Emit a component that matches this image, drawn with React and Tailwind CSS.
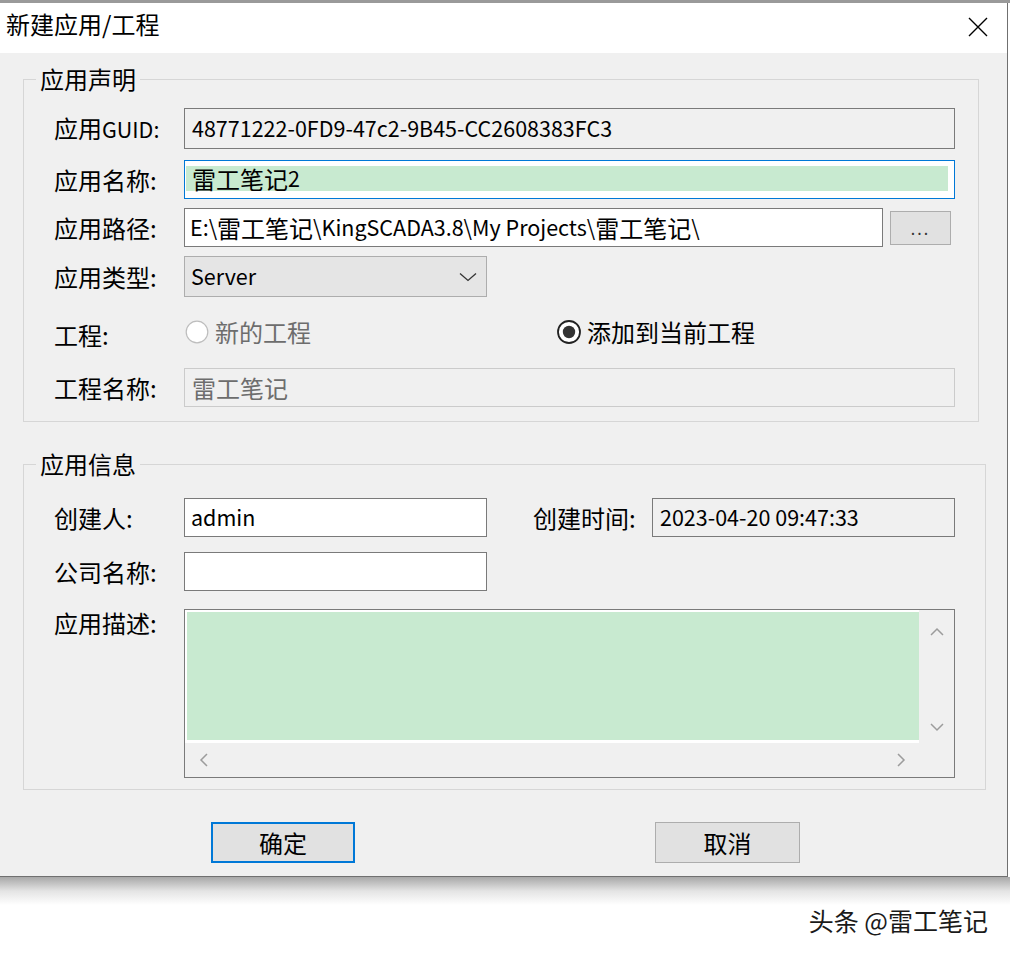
import React from "react";

const Label = ({ children, className = "" }) => (
  <div className={"w-[130px] shrink-0 text-[24px] leading-[28px] text-black " + className}>{children}</div>
);

const L = ({ children }) => <span className="text-[21.5px]">{children}</span>;

const Chevron = ({ dir, className = "" }) => {
  const d = {
    up: "M1 8 L7 2 L13 8",
    down: "M1 2 L7 8 L13 2",
    left: "M8 1 L2 7 L8 13",
    right: "M2 1 L8 7 L2 13",
  }[dir];
  const isV = dir === "up" || dir === "down";
  return (
    <svg width={isV ? 14 : 10} height={isV ? 10 : 14} viewBox={isV ? "0 0 14 10" : "0 0 10 14"} className={className}>
      <path d={d} fill="none" stroke="#9c9c9c" strokeWidth="1.5" />
    </svg>
  );
};

export default function App() {
  return (
    <div className="w-[1010px] h-[958px] bg-white overflow-hidden flex flex-col font-['Noto_Sans_CJK_SC','Noto_Sans',sans-serif] text-black">
      <div className="h-[3px] shrink-0 bg-[#9a9a9a]" />
      <div className="w-[1008px] shrink-0 border-r border-b border-[#707070] bg-[#f0f0f0] flex flex-col">
        {/* Title bar */}
        <div className="h-[50px] bg-white flex items-start justify-between pl-[6px] pr-[19px]">
          <div className="mt-[7px] text-[24px] leading-[28px]">新建应用/工程</div>
          <svg width="20" height="20" viewBox="0 0 20 20" className="mt-[14px]">
            <path d="M1 1 L19 19 M19 1 L1 19" stroke="#000" strokeWidth="1.4" />
          </svg>
        </div>

        {/* Body */}
        <div className="h-[823px] pt-[12px] flex flex-col">
          {/* Group 1 */}
          <fieldset className="ml-[23px] w-[956px] border border-[#d6d6d6] pb-[14px] pl-[30px]">
            <legend className="ml-[-18px] px-[4px] text-[24px] leading-[28px]">应用声明</legend>
            <div className="mt-[15px] flex items-center h-[41px]">
              <Label>应用<L>GUID:</L></Label>
              <div className="w-[771px] h-[41px] border border-[#7a7a7a] bg-[#f0f0f0] flex items-center pl-[7px] text-[21.5px]">
                48771222-0FD9-47c2-9B45-CC2608383FC3
              </div>
            </div>
            <div className="mt-[11px] flex items-center h-[39px]">
              <Label>应用名称:</Label>
              <div className="w-[771px] h-[39px] border border-[#0078d7] bg-white pt-[5px] pb-[7px] pr-[6px] pl-[1px] flex">
                <div className="flex-1 bg-[#c8ead0] flex items-center pl-[6px] text-[24px]">雷工笔记<L>2</L></div>
              </div>
            </div>
            <div className="mt-[9px] flex items-center h-[39px]">
              <Label>应用路径:</Label>
              <div className="w-[699px] h-[39px] border border-[#7a7a7a] bg-white flex items-center pl-[5px] text-[24px] whitespace-nowrap">
                <L>E:\</L>雷工笔记<L>\KingSCADA3.8\My Projects\</L>雷工笔记<L>\</L>
              </div>
              <div className="ml-[7px] w-[61px] h-[34px] border border-[#adadad] bg-[#e1e1e1] flex items-center justify-center text-[16px] tracking-[2px] text-[#333]">
                ...
              </div>
            </div>
            <div className="mt-[9px] flex items-center h-[41px]">
              <Label>应用类型:</Label>
              <div className="w-[303px] h-[41px] border border-[#adadad] bg-[#e5e5e5] flex items-center justify-between pl-[6px] pr-[9px] text-[21.5px]">
                <span>Server</span>
                <svg width="18" height="10" viewBox="0 0 18 10">
                  <path d="M1 1.5 L9 8.5 L17 1.5" fill="none" stroke="#333" strokeWidth="1.3" />
                </svg>
              </div>
            </div>
            <div className="mt-[20px] flex items-center h-[30px]">
              <Label className="mt-[5px]">工程:</Label>
              <div className="w-[372px] flex items-center">
                <svg width="24" height="24" viewBox="0 0 24 24" className="ml-[1px]">
                  <circle cx="12" cy="12" r="10.8" fill="#fff" stroke="#bdbdbd" strokeWidth="1.2" />
                </svg>
                <span className="ml-[6px] text-[24px] leading-[28px] text-[#6d6d6d]">新的工程</span>
              </div>
              <div className="flex items-center">
                <svg width="26" height="26" viewBox="0 0 26 26">
                  <circle cx="13" cy="13" r="11" fill="#fff" stroke="#222" strokeWidth="1.8" />
                  <circle cx="13" cy="13" r="6.2" fill="#333" />
                </svg>
                <span className="ml-[5px] text-[24px] leading-[28px]">添加到当前工程</span>
              </div>
            </div>
            <div className="mt-[21px] flex items-center h-[39px]">
              <Label>工程名称:</Label>
              <div className="w-[771px] h-[39px] border border-[#cbcbcb] bg-[#f0f0f0] flex items-center pl-[7px] text-[24px] text-[#6d6d6d]">
                雷工笔记
              </div>
            </div>
          </fieldset>

          {/* Group 2 */}
          <fieldset className="mt-[28px] ml-[23px] w-[963px] border border-[#d6d6d6] pb-[11px] pl-[30px]">
            <legend className="ml-[-18px] px-[4px] text-[24px] leading-[28px]">应用信息</legend>
            <div className="mt-[20px] flex items-center h-[39px]">
              <Label>创建人:</Label>
              <div className="w-[303px] h-[39px] border border-[#7a7a7a] bg-white flex items-center pl-[6px] text-[21.5px]">admin</div>
              <div className="ml-[46px] w-[119px] text-[24px] leading-[28px]">创建时间:</div>
              <div className="w-[303px] h-[39px] border border-[#7a7a7a] bg-[#f0f0f0] flex items-center pl-[7px] text-[21.5px]">
                2023-04-20 09:47:33
              </div>
            </div>
            <div className="mt-[15px] flex items-center h-[39px]">
              <Label>公司名称:</Label>
              <div className="w-[303px] h-[39px] border border-[#7a7a7a] bg-white" />
            </div>
            <div className="mt-[18px] flex items-start">
              <Label>应用描述:</Label>
              <div className="w-[771px] h-[169px] border border-[#7a7a7a] bg-[#f0f0f0] flex flex-col">
                <div className="h-[133px] flex">
                  <div className="flex-1 bg-white pt-[2px] pl-[2px] pb-[3px]">
                    <div className="h-full bg-[#c8ead0]" />
                  </div>
                  <div className="w-[35px] flex flex-col items-center justify-between pt-[17px] pb-[11px]">
                    <Chevron dir="up" />
                    <Chevron dir="down" />
                  </div>
                </div>
                <div className="flex-1 flex items-center justify-between pl-[14px] pr-[48px]">
                  <Chevron dir="left" />
                  <Chevron dir="right" />
                </div>
              </div>
            </div>
          </fieldset>

          {/* Buttons */}
          <div className="mt-[32px] flex">
            <div className="ml-[211px] w-[144px] h-[41px] border-2 border-[#0078d7] bg-[#e1e1e1] flex items-center justify-center text-[24px]">
              确定
            </div>
            <div className="ml-[300px] w-[145px] h-[41px] border border-[#adadad] bg-[#e1e1e1] flex items-center justify-center text-[24px]">
              取消
            </div>
          </div>
        </div>
      </div>
      <div className="h-[28px] shrink-0 bg-gradient-to-b from-[#a8a8a8] via-[#e4e4e4] to-white" />
      <div className="h-[30px] flex justify-end pr-[22px] text-[25px] leading-[30px] text-[#1a1a1a]">
        头条 @雷工笔记
      </div>
    </div>
  );
}
